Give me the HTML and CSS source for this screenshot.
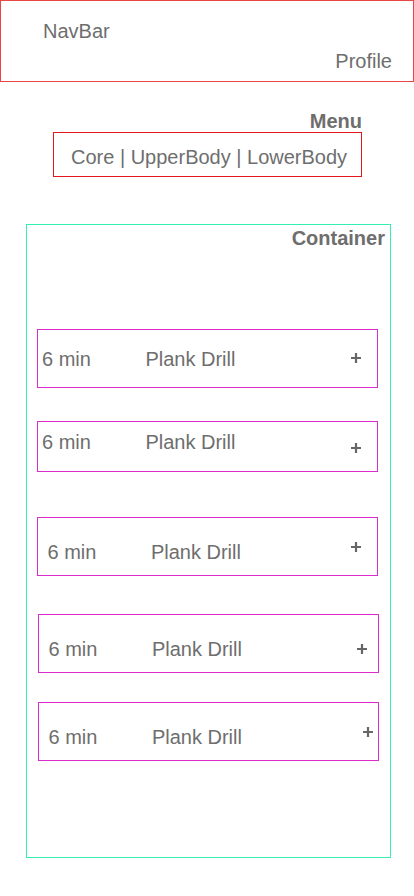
FILE: index.html
```html
<!DOCTYPE html>
<html lang="en">
<head>
<meta charset="utf-8">
<title>Workout</title>
<link rel="stylesheet" href="styles.css">
</head>
<body>
<header class="navbar">
  <div class="nav-title">NavBar</div>
  <div class="nav-profile">Profile</div>
</header>
<section class="menu">
  <div class="menu-label">Menu</div>
  <nav class="menu-box">Core | UpperBody | LowerBody</nav>
</section>
<main class="container">
  <div class="container-label">Container</div>
  <div class="row row-a"><span class="dur">6 min</span><span class="name">Plank Drill</span><svg class="plus" width="10" height="10" viewBox="0 0 10 10"><path d="M0 5H10M5 0V10"/></svg></div>
  <div class="row row-b"><span class="dur">6 min</span><span class="name">Plank Drill</span><svg class="plus" width="10" height="10" viewBox="0 0 10 10"><path d="M0 5H10M5 0V10"/></svg></div>
  <div class="row row-c"><span class="dur">6 min</span><span class="name">Plank Drill</span><svg class="plus" width="10" height="10" viewBox="0 0 10 10"><path d="M0 5H10M5 0V10"/></svg></div>
  <div class="row row-d"><span class="dur">6 min</span><span class="name">Plank Drill</span><svg class="plus" width="10" height="10" viewBox="0 0 10 10"><path d="M0 5H10M5 0V10"/></svg></div>
  <div class="row row-e"><span class="dur">6 min</span><span class="name">Plank Drill</span><svg class="plus" width="10" height="10" viewBox="0 0 10 10"><path d="M0 5H10M5 0V10"/></svg></div>
</main>
</body>
</html>
```
FILE: styles.css
```css
* { box-sizing: border-box; }
html, body { margin: 0; padding: 0; background: #ffffff; }
body {
  font-family: "Liberation Sans", Arial, sans-serif;
  font-size: 20px;
  line-height: 23px;
  color: #6e6e6e;
  width: 414px;
}
.navbar {
  height: 82px;
  border: 1px solid #e84545;
  padding: 19px 21px 0 42px;
}
.nav-profile {
  text-align: right;
  margin-top: 7px;
}
.menu {
  width: 309px;
  margin: 28px 0 0 53px;
}
.menu-label {
  font-weight: bold;
  text-align: right;
  line-height: 22px;
}
.menu-box {
  width: 309px;
  height: 45px;
  border: 1px solid #e3191f;
  padding: 13px 0 0 17px;
  white-space: nowrap;
}
.container {
  width: 365px;
  height: 634px;
  margin: 47px 0 0 26px;
  border: 1px solid #33efb4;
  padding: 1px 5px 0 0;
  display: flex;
  flex-direction: column;
}
.container-label {
  font-weight: bold;
  text-align: right;
  padding-top: 1px;
}
.row {
  display: flex;
  align-items: flex-start;
  flex: none;
  width: 341px;
  height: 59px;
  margin-left: 10px;
  border: 1px solid #dd2ccc;
  padding-left: var(--text-left);
  padding-right: var(--plus-right);
}
.dur {
  width: 103.4px;
  flex: none;
  margin-top: var(--text-top);
}
.name {
  flex: 1;
  margin-top: var(--text-top);
}
.plus {
  flex: none;
  margin-top: var(--plus-top);
  stroke: #666666;
  stroke-width: 2.2;
  fill: none;
}
.row-a { margin-top: 79px; --text-top: 18px; --plus-top: 22.7px; --text-left: 4px; --plus-right: 16px; }
.row-b { margin-top: 33px; height: 51px; --text-top: 9px; --plus-top: 21.3px; --text-left: 4px; --plus-right: 16px; }
.row-c { margin-top: 45px; --text-top: 23px; --plus-top: 23.7px; --text-left: 9.5px; --plus-right: 16px; }
.row-d { margin-top: 38px; margin-left: 11px; --text-top: 22.6px; --plus-top: 29.3px; --text-left: 9.5px; --plus-right: 11px; }
.row-e { margin-top: 29px; margin-left: 11px; --text-top: 23px; --plus-top: 24.3px; --text-left: 9.5px; --plus-right: 5px; }
```
